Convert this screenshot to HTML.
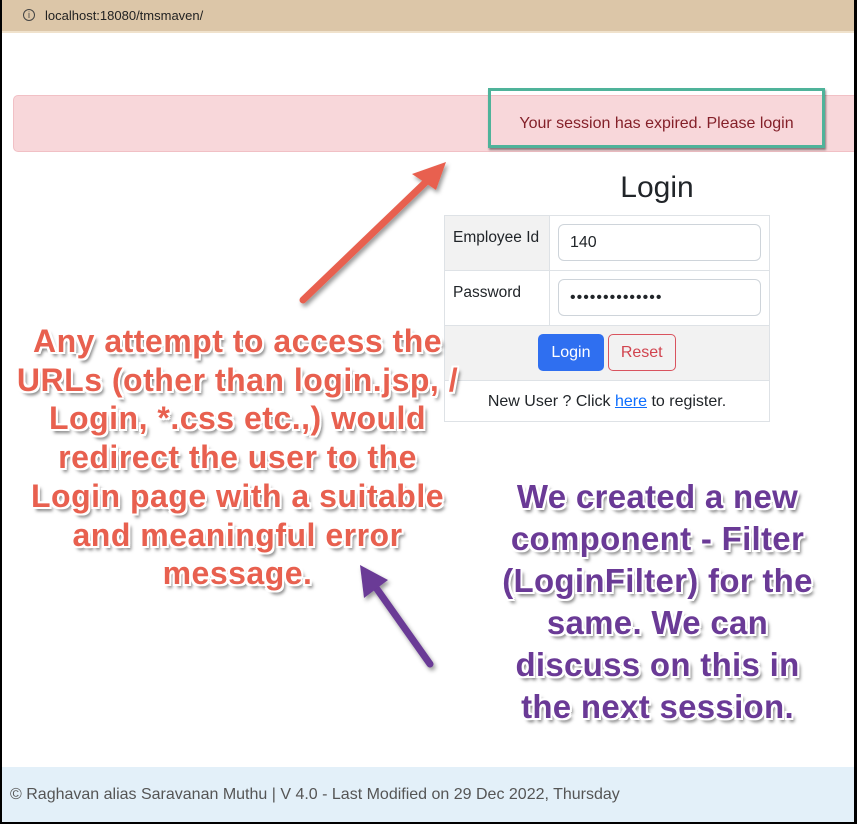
<!DOCTYPE html>
<html><head><meta charset="utf-8"><style>
*{box-sizing:border-box;margin:0;padding:0}
body{width:857px;height:824px;position:relative;overflow:hidden;background:#fff;font-family:"Liberation Sans",sans-serif;color:#212529}
.frame{position:absolute;left:0;top:0;width:857px;height:824px;border-left:2px solid #000;border-right:3px solid #000;border-bottom:2px solid #000;pointer-events:none;z-index:9}
.top{position:absolute;left:0;top:0;width:857px;height:33px;background:#dcc6a8;border-bottom:2px solid #f0e2cc}
.top span{position:absolute;left:45px;top:8px;font-size:13px;color:#222}
.top i{position:absolute;left:23px;top:9px;width:12px;height:12px;border:1.3px solid #444;border-radius:50%;font-style:normal;font-size:9px;line-height:10px;text-align:center;color:#444}
.alert{position:absolute;left:13px;top:95px;width:850px;height:57px;background:#f8d7da;border:1px solid #f1c0c5;border-radius:5px}
.msg{position:absolute;left:488px;top:88px;width:337px;height:60px;border:3px solid #4fb39a;box-shadow:1px 2px 2px rgba(0,0,0,.45);color:#842029;font-size:16px;text-align:center;line-height:66px}
h1{position:absolute;left:557px;width:200px;top:171px;text-align:center;font-size:30px;font-weight:normal}
table{position:absolute;left:444px;top:215px;width:326px;border-collapse:collapse;font-size:15.5px}
td{border:1px solid #dee2e6;vertical-align:top}
.g{background:#f2f2f2}
.lab{width:105px;padding:13px 8px}
.inp{height:37px;margin:8px;border:1px solid #ced4da;border-radius:6px;background:#fff;padding:9px 11px;font-size:16px}
.btn{display:inline-block;height:37px;line-height:35px;padding:0 12px;border-radius:5px;font-size:16px;margin-top:8px}
.a{position:absolute;font-weight:bold;text-align:center;white-space:nowrap;text-shadow:-2px -2px 0 #fff,2px -2px 0 #fff,-2px 2px 0 #fff,2px 2px 0 #fff,0 -2px 0 #fff,0 2px 0 #fff,-2px 0 0 #fff,2px 0 0 #fff,3px 4px 3px rgba(0,0,0,.5)}
.red{left:10px;width:455px;top:322px;font-size:32px;line-height:38.7px;color:#e8604f;letter-spacing:0.5px}
.pur{left:475px;width:365px;top:476px;font-size:33px;line-height:42px;color:#6a3a96;letter-spacing:0.3px}
.foot{position:absolute;left:0;top:767px;width:857px;height:57px;background:#e3f0f9;font-size:16px;color:#555;padding:19px 10px}
</style></head><body>
<div class="top"><i>i</i><span>localhost:18080/tmsmaven/</span></div>
<div class="alert"></div>
<div class="msg">Your session has expired. Please login</div>
<h1>Login</h1>
<table>
<tr style="height:55px"><td class="g lab">Employee Id</td><td><div class="inp">140</div></td></tr>
<tr style="height:55px"><td class="lab">Password</td><td><div class="inp" style="letter-spacing:1px">••••••••••••••</div></td></tr>
<tr style="height:55px" class="g"><td colspan="2" style="text-align:center"><span class="btn" style="background:#2f6ff0;color:#fff;border:1px solid #2f6ff0">Login</span> <span class="btn" style="color:#d1444f;border:1px solid #d9535e">Reset</span></td></tr>
<tr style="height:41px"><td colspan="2" style="text-align:center;padding-top:12px;font-size:16px">New User ? Click <span style="color:#0d6efd;text-decoration:underline">here</span> to register.</td></tr>
</table>
<svg style="position:absolute;left:0;top:0" width="857" height="824">
<defs><filter id="s"><feDropShadow dx="2" dy="3" stdDeviation="2" flood-opacity=".4"/></filter></defs>
<g filter="url(#s)">
<line x1="303" y1="300" x2="430" y2="178" stroke="#e8604f" stroke-width="7" stroke-linecap="round"/>
<polygon points="446,162 412,174 436,190" fill="#e8604f"/>
<line x1="430" y1="664" x2="372" y2="582" stroke="#6a3a96" stroke-width="7" stroke-linecap="round"/>
<polygon points="360,565 364,598 388,580" fill="#6a3a96"/>
</g></svg>
<div class="a red">Any attempt to access the<br>URLs (other than login.jsp, /<br>Login, *.css etc.,) would<br>redirect the user to the<br>Login page with a suitable<br>and meaningful error<br>message.</div>
<div class="a pur">We created a new<br>component - Filter<br>(LoginFilter) for the<br>same. We can<br>discuss on this in<br>the next session.</div>
<div class="foot">© Raghavan alias Saravanan Muthu | V 4.0 - Last Modified on 29 Dec 2022, Thursday</div>
<div class="frame"></div>
</body></html>
